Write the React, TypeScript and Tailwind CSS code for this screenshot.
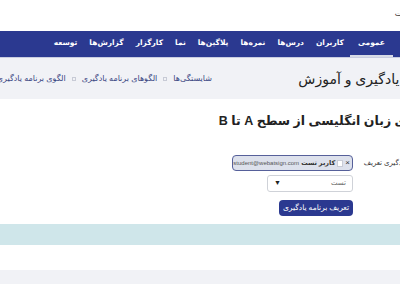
import React from "react";

const navItems = ["عمومی", "کاربران", "درس‌ها", "نمره‌ها", "پلاگین‌ها", "نما", "کارگزار", "گزارش‌ها", "توسعه"];

export default function App() {
    return (
        <div
            dir="rtl"
            className="w-[400px] h-[284px] overflow-hidden bg-white"
            style={{ fontFamily: '"Liberation Sans", "DejaVu Sans", sans-serif' }}
        >
            {/* Top bar */}
            <div className="h-[31px] overflow-hidden">
                <div className="-mr-[14px] pt-[8px] text-[8px] text-[#333] whitespace-nowrap">سایت</div>
            </div>

            {/* Main navigation */}
            <nav className="h-[27px] bg-[#2b3990] flex items-stretch pr-[7px] border-b border-[#c9cde0]">
                {navItems.map((item, i) => (
                    <div
                        key={item}
                        className={
                            "flex items-center whitespace-nowrap text-[7.5px] font-bold text-white border-b-2 " +
                            (i === 0 ? "px-[8px] border-[#d8dbe6]" : "px-[6px] border-transparent")
                        }
                    >
                        {item}
                    </div>
                ))}
            </nav>

            {/* Page header */}
            <div className="h-[41px] bg-[#f1f2f6] flex items-center overflow-hidden">
                <div className="-mr-[20px] flex items-center">
                    <div className="w-[208px] shrink-0 whitespace-nowrap overflow-hidden pt-[2px]">
                        <div className="-mr-[18px] text-[14px] text-[#222]">برنامه یادگیری و آموزش</div>
                    </div>
                    <div className="flex items-center gap-[6px] whitespace-nowrap text-[8px] text-[#3a4682] shrink-0">
                        <span>شایستگی‌ها</span>
                        <span className="w-[4px] h-[4px] border border-[#c8cbd6]"></span>
                        <span>الگوهای برنامه یادگیری</span>
                        <span className="w-[4px] h-[4px] border border-[#c8cbd6]"></span>
                        <span>الگوی برنامه یادگیری زبان انگلیسی از سطح A تا B</span>
                    </div>
                </div>
            </div>

            {/* Content */}
            <div className="overflow-hidden">
                <div className="-mr-[42px]">
                    <h2 className="mt-[11px] h-[22px] whitespace-nowrap text-[12.5px] font-bold text-[#222] leading-[22px]">
                        یادگیری زبان انگلیسی از سطح A تا B
                    </h2>
                </div>

                <div className="-mr-[6px] mt-[23px] flex">
                    <div className="w-[53px] shrink-0 whitespace-nowrap text-[7px] text-[#333] pt-[3px]">
                        یادگیری تعریف
                    </div>
                    <div className="flex flex-col">
                        <div className="w-[121px] h-[16px] rounded-[4px] border border-[#56609a] bg-[#dde1ec] flex items-center gap-[2px] pr-[2px] whitespace-nowrap overflow-hidden">
                            <span className="text-[8px] text-[#333] leading-none">×</span>
                            <span className="w-[6px] h-[7px] bg-white border border-[#c9ccd6]"></span>
                            <span className="text-[6.5px] font-bold text-[#333]">کاربر تست</span>
                            <span className="text-[6px] text-[#555]">student@webatsign.com</span>
                        </div>
                        <div className="mt-[4px] w-[86px] h-[17px] rounded-[3px] border border-[#cfd2d8] bg-white flex items-center justify-between px-[6px]">
                            <span className="text-[7px] text-[#666]">تست</span>
                            <span className="text-[7px] text-[#222]">▼</span>
                        </div>
                        <div className="mt-[8px] w-[74px] h-[16px] rounded-[4px] bg-[#2b3990] flex items-center justify-center whitespace-nowrap text-[7.5px] text-white">
                            تعریف برنامه یادگیری
                        </div>
                    </div>
                </div>

                <div className="mt-[8px] h-[21px] bg-[#cfe6ea]"></div>
                <div className="h-[25px]"></div>
                <div className="h-[20px] bg-[#f1f2f6]"></div>
            </div>
        </div>
    );
}
